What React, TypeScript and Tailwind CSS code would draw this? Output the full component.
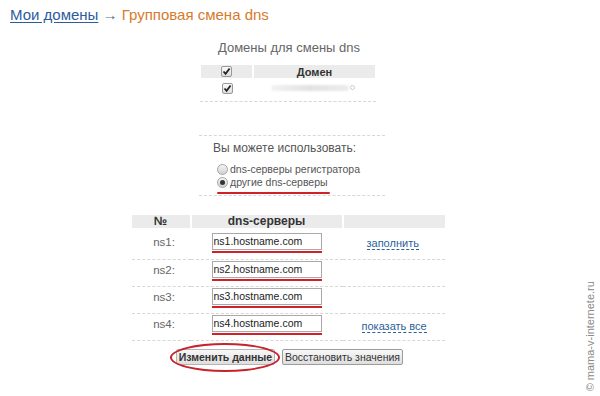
import React from 'react';

const font = { fontFamily: '"Liberation Sans", Arial, sans-serif' };

const Check = () => (
  <span className="inline-flex w-[11px] h-[11px] items-center justify-center rounded-[2px] border border-[#9a9a9a] bg-gradient-to-b from-[#fafafa] to-[#dcdcdc] align-middle">
    <svg width="9" height="9" viewBox="0 0 9 9">
      <path d="M1.5 4.5 L3.6 6.8 L7.6 1.5" fill="none" stroke="#222" strokeWidth="1.8" />
    </svg>
  </span>
);

const Radio = ({ on }: { on?: boolean }) => (
  <span className="inline-flex w-[11px] h-[11px] items-center justify-center rounded-full border border-[#a5a5a5] bg-gradient-to-b from-[#f4f4f4] to-[#d2d2d2]">
    {on && <span className="w-[5px] h-[5px] rounded-full bg-[#333]" />}
  </span>
);

const Dash = ({ w }: { w: string }) => (
  <div className={`${w} border-t border-dashed border-[#d7d7d7]`} />
);

const servers = [
  { ns: 'ns1:', host: 'ns1.hostname.com', link: 'заполнить' },
  { ns: 'ns2:', host: 'ns2.hostname.com', link: '' },
  { ns: 'ns3:', host: 'ns3.hostname.com', link: '' },
  { ns: 'ns4:', host: 'ns4.hostname.com', link: 'показать все' },
];

export default function App() {
  return (
    <div className="relative w-[600px] h-[396px] bg-white overflow-hidden text-[#555]" style={font}>
      <div className="w-[576px]">
        {/* breadcrumb */}
        <div className="pl-[10px] pt-[5px] h-[30px] text-[15px] leading-[20px]">
          <a className="text-[#2b5c9e] underline underline-offset-2">Мои домены</a>
          <span className="text-[#55708f]"> → </span>
          <span className="text-[#d77a2c]">Групповая смена dns</span>
        </div>

        {/* domains */}
        <div className="flex flex-col items-center">
          <div className="mt-[10px] ml-[2px] text-[13px] leading-[16px] text-[#666]">Домены для смены dns</div>
          <table className="mt-[9px] w-[174px] text-[11px] border-collapse">
            <tbody>
              <tr className="h-[13px] bg-[#ebebeb]">
                <td className="w-[52px] text-center border-r-2 border-white leading-[10px]"><Check /></td>
                <td className="text-center font-bold text-[#333] leading-[10px]">Домен</td>
              </tr>
              <tr className="h-[19px]">
                <td className="text-center"><Check /></td>
                <td>
                  <div className="flex items-center ml-[18px] gap-[1px]">
                    <div className="w-[78px] h-[6px] rounded-full bg-gradient-to-r from-[#f2f2f2] via-[#e2e2e2] to-[#ececec] blur-[1px]" />
                    <div className="w-[5px] h-[5px] rounded-full border border-[#ccc]" />
                  </div>
                </td>
              </tr>
            </tbody>
          </table>
          <div className="mt-[4px]"><Dash w="w-[176px]" /></div>
          <div className="mt-[33px] ml-[7px]"><Dash w="w-[186px]" /></div>

          {/* radios */}
          <div className="w-[180px] ml-[20px] pt-[6px] text-[12px] leading-[13px] text-[#555]">
            <div className="pl-[5px]">Вы можете использовать:</div>
            <div className="mt-[8px] pl-[9px] flex items-center gap-[2px] text-[10.5px]"><Radio /><span>dns-серверы регистратора</span></div>
            <div className="pl-[9px] flex items-center gap-[2px] text-[10.5px]"><Radio on /><span>другие dns-серверы</span></div>
            <div className="mt-[3px] ml-[9px] w-[113px] h-[2px] bg-[#d0202a] rounded-full" />
          </div>
          <div className="mt-[1px] ml-[7px]"><Dash w="w-[186px]" /></div>

          {/* servers */}
          <table className="mt-[19px] w-[313px] text-[12px] border-collapse">
            <thead>
              <tr className="h-[13px] bg-[#ebebeb] text-[#333] leading-[11px]">
                <th className="w-[59px] border-r-2 border-white font-bold">№</th>
                <th className="w-[152px] border-r-2 border-white font-bold">dns-серверы</th>
                <th />
              </tr>
            </thead>
            <tbody>
              {servers.map((s, i) => (
                <tr key={s.ns} className={`${i === 0 ? 'h-[31px]' : 'h-[27px]'} border-b border-dashed border-[#d7d7d7]`}>
                  <td className={`text-center text-[#666] align-top pl-[6px] text-[11.5px] ${i === 0 ? 'pt-[6px]' : 'pt-[2px]'}`}>{s.ns}</td>
                  <td className={`align-top pl-[21px] ${i === 0 ? 'pt-[5px]' : 'pt-[1px]'}`}>
                    <div className="w-[110px] h-[17px] border border-[#a9a9a9] text-[10.5px] leading-[15px] pl-[1px] text-[#222] bg-white">{s.host}</div>
                    <div className="mt-[1px] w-[110px] h-[2px] bg-[#d0202a]" />
                  </td>
                  <td className={`align-top ${i === 0 ? 'pt-[6px]' : 'pt-[3px]'} ${i === 0 ? 'pl-[24px]' : 'pl-[19px]'}`}>
                    {s.link && (
                      <span className="text-[11px] text-[#2d5f9a] border-b border-dashed border-[#2d5f9a] leading-[12px] inline-block">{s.link}</span>
                    )}
                  </td>
                </tr>
              ))}
            </tbody>
          </table>

          {/* buttons */}
          <div className="mt-[8px] ml-[3px] flex items-center gap-[7px] text-[10.5px]">
            <div className="relative">
              <div className="absolute -left-[6px] -top-[6px] w-[110px] h-[29px] rounded-[50%] border-2 border-[#c8232c]" />
              <button className="h-[16px] w-[99px] leading-[14px] font-bold text-[#333] bg-gradient-to-b from-[#f8f8f8] to-[#dedede] border border-[#b5b5b5] rounded-[2px]">Изменить данные</button>
            </div>
            <button className="h-[16px] px-[2px] leading-[14px] text-[#333] bg-gradient-to-b from-[#f8f8f8] to-[#dedede] border border-[#9c9c9c] rounded-[2px]">Восстановить значения</button>
          </div>
        </div>
      </div>

      {/* watermark */}
      <div className="absolute right-[3px] bottom-[4px] w-[14px] h-[112px] flex items-center justify-center">
        <span className="-rotate-90 whitespace-nowrap text-[11px] text-[#8a8a8a]">© mama-v-internete.ru</span>
      </div>
    </div>
  );
}
